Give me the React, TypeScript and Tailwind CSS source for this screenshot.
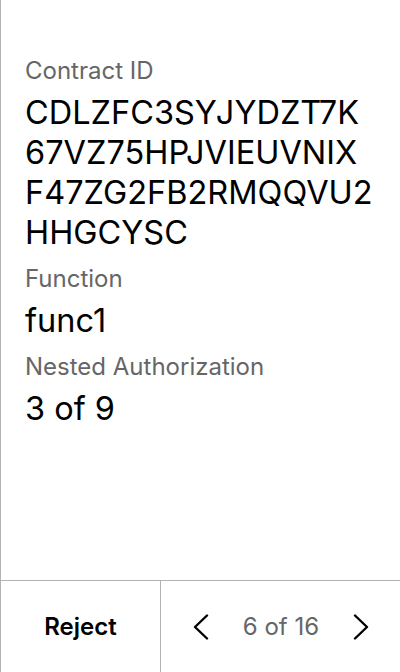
const contractLines = ['CDLZFC3SYJYDZT7K', '67VZ75HPJVIEUVNIX', 'F47ZG2FB2RMQQVU2', 'HHGCYSC'];

function Field({ label, children }: { label: string; children: React.ReactNode }) {
  return (
    <div className="flex flex-col">
      <div className="text-[24px] leading-[30px] text-[#666666]">{label}</div>
      <div className="mt-[7px] text-[32.5px] leading-[40px] text-black">{children}</div>
    </div>
  );
}

function Chevron({ dir }: { dir: 'left' | 'right' }) {
  return (
    <svg width="16" height="26" viewBox="0 0 16 26" fill="none" stroke="black" strokeWidth={2.4} strokeLinecap="round" strokeLinejoin="round">
      {dir === 'left' ? <polyline points="14,1.5 2,13 14,24.5" /> : <polyline points="2,1.5 14,13 2,24.5" />}
    </svg>
  );
}

export default function App() {
  return (
    <div
      className="w-[400px] h-[672px] flex flex-col bg-white border-l border-[#b3b3b3]"
      style={{ fontFamily: 'Inter, "Liberation Sans", sans-serif' }}
    >
      <div className="flex-1 px-6 pt-[56px] flex flex-col gap-[11px]">
        <Field label="Contract ID">
          {contractLines.map((line) => (
            <span key={line} className="block">
              {line}
            </span>
          ))}
        </Field>
        <Field label="Function">func1</Field>
        <Field label="Nested Authorization">3 of 9</Field>
      </div>

      <div className="h-[92px] flex border-t border-[#b3b3b3]">
        <button className="w-[160px] flex items-center justify-center border-r border-[#b3b3b3] text-[24px] font-semibold text-black">
          Reject
        </button>
        <div className="flex-1 flex items-center justify-between pl-[32px] pr-[31px]">
          <Chevron dir="left" />
          <span className="text-[24px] text-[#666666]">6 of 16</span>
          <Chevron dir="right" />
        </div>
      </div>
    </div>
  );
}
